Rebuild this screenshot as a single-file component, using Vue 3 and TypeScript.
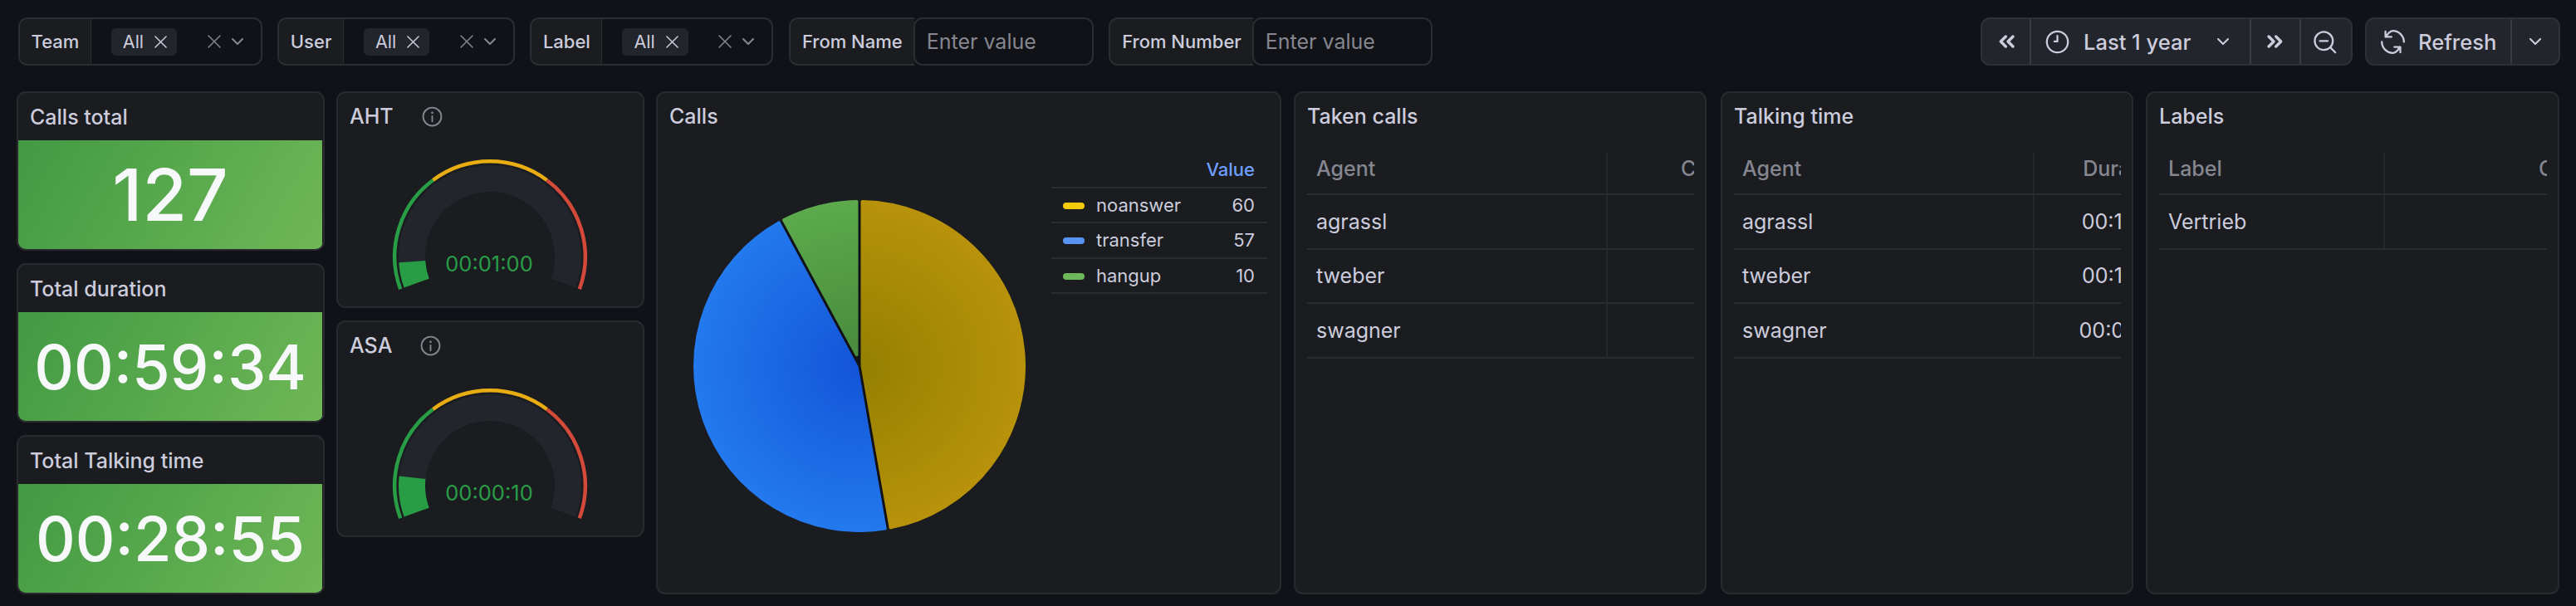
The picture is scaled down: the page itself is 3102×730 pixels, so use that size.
<script setup lang="ts">
import { computed } from "vue";

const dropdowns = ["Team", "User", "Label"];
const textFilters = ["From Name", "From Number"];
const stats = [
  { title: "Calls total", value: "127", big: true },
  { title: "Total duration", value: "00:59:34", big: false },
  { title: "Total Talking time", value: "00:28:55", big: false },
];

// gauges share one geometry, only the value differs
const CX = 125;
const CY = 125;
const START = 200;
const SWEEP = 220;

const polar = (r: number, deg: number) => {
  const a = (deg * Math.PI) / 180;
  return [CX + r * Math.cos(a), CY - r * Math.sin(a)];
};

const arc = (r: number, from: number, to: number) => {
  const [x0, y0] = polar(r, START - SWEEP * from);
  const [x1, y1] = polar(r, START - SWEEP * to);
  const large = (to - from) * SWEEP > 180 ? 1 : 0;
  return `M${x0} ${y0}A${r} ${r} 0 ${large} 1 ${x1} ${y1}`;
};

const gauges = [
  { title: "AHT", value: "00:01:00", pct: 0.074 },
  { title: "ASA", value: "00:00:10", pct: 0.118 },
];
const thresholds = [
  { from: 0, to: 1 / 3, color: "#299c46" },
  { from: 1 / 3, to: 2 / 3, color: "#e8ad12" },
  { from: 2 / 3, to: 1, color: "#d44a3a" },
];

const legend = [
  { name: "noanswer", value: 60, color: "#f2cc0c", inner: "#948000", outer: "#b8920a" },
  { name: "transfer", value: 57, color: "#5794f2", inner: "#1354d8", outer: "#2379ee" },
  { name: "hangup", value: 10, color: "#6cb85a", inner: "#47893b", outer: "#5caa4c" },
];

const PIE_R = 200;
const slices = computed(() => {
  const total = legend.reduce((s, l) => s + l.value, 0);
  const sw = 4;
  const h = 1.5 + sw / 2;
  const r = PIE_R - sw / 2;
  let at = 0;
  return legend.map((l, i) => {
    const size = (l.value / total) * 2 * Math.PI;
    const a0 = at;
    const a1 = at + size;
    at = a1;
    const d = Math.asin(h / r);
    const mid = (a0 + a1) / 2;
    const apex = h / Math.sin(size / 2);
    const px = (rad: number, a: number) => [PIE_R + rad * Math.sin(a), PIE_R - rad * Math.cos(a)];
    const [ax, ay] = px(apex, mid);
    const [x0, y0] = px(r, a0 + d);
    const [x1, y1] = px(r, a1 - d);
    return {
      id: `pie-${i}`,
      inner: l.inner,
      outer: l.outer,
      d: `M${ax} ${ay}L${x0} ${y0}A${r} ${r} 0 ${size > Math.PI ? 1 : 0} 1 ${x1} ${y1}Z`,
    };
  });
});

const tables = [
  {
    title: "Taken calls",
    head: ["Agent", "Count"],
    rows: [["agrassl", ""], ["tweber", ""], ["swagner", ""]],
    cls: "t-taken",
  },
  {
    title: "Talking time",
    head: ["Agent", "Duration"],
    rows: [["agrassl", "00:13:48"], ["tweber", "00:13:00"], ["swagner", "00:02:07"]],
    cls: "t-talk",
  },
  {
    title: "Labels",
    head: ["Label", "Count"],
    rows: [["Vertrieb", ""]],
    cls: "t-labels",
  },
];
</script>

<template>
  <div class="page">
    <header class="toolbar">
      <div v-for="name in dropdowns" :key="name" class="filter">
        <label class="filter-label">{{ name }}</label>
        <div class="filter-field">
          <span class="chip">All
            <svg class="ic-chip" viewBox="4 4 16 16"><path d="M5 5l14 14M19 5L5 19" /></svg>
          </span>
          <svg class="ic-clear" viewBox="4 4 16 16"><path d="M5 5l14 14M19 5L5 19" /></svg>
          <svg class="ic-angle" viewBox="0 0 24 24"><path d="M6 9l6 6 6-6" /></svg>
        </div>
      </div>
      <div v-for="name in textFilters" :key="name" class="filter">
        <label class="filter-label text-label">{{ name }}</label>
        <input class="filter-input" placeholder="Enter value" />
      </div>

      <div class="spacer"></div>

      <div class="btn-group">
        <button class="tb-btn square first-btn">
          <svg class="ic-double" viewBox="0 0 24 24"><path d="M11.5 7.500L7 12l4.500 4.500M18 7.500L13.500 12l4.500 4.500" /></svg>
        </button>
        <button class="tb-btn range">
          <svg class="ic-btn" viewBox="0 0 24 24">
            <circle cx="12" cy="12" r="10.500" />
            <path d="M12 6v5.500H9" />
          </svg>
          <span class="range-text">Last 1 year</span>
          <svg class="ic-small" viewBox="0 0 24 24"><path d="M6 9l6 6 6-6" /></svg>
        </button>
        <button class="tb-btn square">
          <svg class="ic-double" viewBox="0 0 24 24"><path d="M6 7.500L10.500 12 6 16.500M12.500 7.500L17 12l-4.500 4.500" /></svg>
        </button>
        <button class="tb-btn square last">
          <svg class="ic-btn ic-zoom" viewBox="0 0 24 24">
            <circle cx="11" cy="11" r="9" />
            <path d="M7 11h8M17.500 17.500L22.500 22.500" />
          </svg>
        </button>
      </div>

      <div class="btn-group refresh">
        <button class="tb-btn refresh-main">
          <svg class="ic-btn" viewBox="0 0 24 24">
            <path d="M23 12C23 6 18 1 12 1 9 1 6.500 4.500 5 7M4.600 1.500V7h6" />
            <path d="M1 12c0 6 5 11 11 11 3 0 5.500-3.500 7-6M19.400 22.500V17h-6" />
          </svg>
          <span>Refresh</span>
        </button>
        <button class="tb-btn refresh-menu">
          <svg class="ic-small" viewBox="0 0 24 24"><path d="M6 9l6 6 6-6" /></svg>
        </button>
      </div>
    </header>

    <main class="dash">
      <div class="col col-stats">
        <section v-for="s in stats" :key="s.title" class="panel stat">
          <h2 class="panel-title stat-title">{{ s.title }}</h2>
          <div class="stat-body" :class="{ big: s.big }">{{ s.value }}</div>
        </section>
      </div>

      <div class="col col-gauges">
        <section v-for="g in gauges" :key="g.title" class="panel gauge">
          <h2 class="panel-title gauge-title">
            {{ g.title }}
            <svg class="ic-info" viewBox="0 0 24 24">
              <circle cx="12" cy="12" r="10.500" />
              <path d="M12 11.500v6" />
              <circle class="dot" cx="12" cy="7.500" r="1.300" />
            </svg>
          </h2>
          <svg class="gauge-svg" viewBox="0 0 250 170">
            <path :d="arc(94, 0, 1)" class="g-track" />
            <path :d="arc(94, 0, g.pct)" class="g-fill" />
            <path v-for="t in thresholds" :key="t.color" :d="arc(114.75, t.from, t.to)" class="g-thresh" :stroke="t.color" />
            <text x="124" y="143" text-anchor="middle" class="g-value">{{ g.value }}</text>
          </svg>
        </section>
      </div>

      <section class="panel pie-panel">
        <h2 class="panel-title">Calls</h2>
        <div class="pie-body">
          <svg class="pie" viewBox="0 0 400 400">
            <defs>
              <radialGradient v-for="s in slices" :id="s.id" :key="s.id" gradientUnits="userSpaceOnUse" cx="200" cy="200" r="200">
                <stop offset="0" :stop-color="s.inner" />
                <stop offset="1" :stop-color="s.outer" />
              </radialGradient>
            </defs>
            <circle cx="200" cy="200" r="197" fill="#111217" />
            <path v-for="s in slices" :key="s.id" :d="s.d" :fill="`url(#${s.id})`" :stroke="`url(#${s.id})`" stroke-width="4" stroke-linejoin="round" />
          </svg>
          <table class="legend">
            <thead>
              <tr><th></th><th class="legend-value">Value</th></tr>
            </thead>
            <tbody>
              <tr v-for="l in legend" :key="l.name">
                <td class="legend-name">
                  <i class="swatch" :style="{ background: l.color }"></i>{{ l.name }}
                </td>
                <td class="legend-num">{{ l.value }}</td>
              </tr>
            </tbody>
          </table>
        </div>
      </section>

      <section v-for="t in tables" :key="t.title" class="panel table-panel" :class="t.cls">
        <h2 class="panel-title">{{ t.title }}</h2>
        <div class="table-wrap">
          <div class="tr th">
            <div class="td first">{{ t.head[0] }}</div>
            <div class="td second">{{ t.head[1] }}</div>
          </div>
          <div v-for="r in t.rows" :key="r[0]" class="tr">
            <div class="td first">{{ r[0] }}</div>
            <div class="td second">{{ r[1] }}</div>
          </div>
        </div>
      </section>
    </main>
  </div>
</template>

<style>
html,
body {
  margin: 0;
  background: #111217;
  overflow: hidden;
}
</style>

<style scoped>
.page {
  width: 3102px;
  height: 730px;
  box-sizing: border-box;
  padding: 21px 19px 0 20px;
  background: #111217;
  color: #ccccdc;
  font-family: Inter, "Noto Sans", sans-serif;
  font-size: 25px;
}

svg {
  fill: none;
  stroke: currentColor;
  stroke-linecap: round;
  stroke-linejoin: round;
  flex: none;
}

/* toolbar */
.toolbar {
  display: flex;
  height: 58px;
  gap: 18.5px;
  padding-left: 2px;
}

.spacer {
  flex: 1;
}

.filter {
  display: flex;
  height: 58px;
}

.filter-label {
  display: flex;
  align-items: center;
  padding: 0 13.5px;
  font-size: 22px;
  font-weight: 500;
  background: #1a1c20;
  border: 2px solid #2b2d33;
  border-right-width: 1px;
  border-radius: 11px 0 0 11px;
  box-sizing: content-box;
  height: 54px;
}

.text-label {
  padding: 0 14px;
  border-right-width: 0;
}

.filter-field {
  width: 206px;
  box-sizing: border-box;
  display: flex;
  align-items: center;
  padding-left: 24px;
  border: 2px solid #2b2d33;
  border-left: 0;
  border-radius: 0 11px 11px 0;
}

.chip {
  display: flex;
  align-items: center;
  gap: 13px;
  height: 33px;
  padding: 0 12px 0 14px;
  font-size: 21.5px;
  background: #22252b;
  border-radius: 6px;
}

.ic-chip {
  width: 15px;
  height: 15px;
  stroke-width: 1.6;
}

.ic-clear {
  width: 16px;
  height: 16px;
  margin-left: auto;
  stroke-width: 1.5;
  color: #85868f;
}

.ic-angle {
  width: 24px;
  height: 24px;
  margin: 0 16px 0 8px;
  stroke-width: 2.1;
  color: #85868f;
}

.filter-input {
  width: 217px;
  height: 58px;
  box-sizing: border-box;
  padding: 0 14px;
  margin-left: -1px;
  font: 400 25px Inter, "Noto Sans", sans-serif;
  color: #ccccdc;
  background: #111217;
  border: 2px solid #2b2d33;
  border-radius: 11px;
  outline: none;
}

.filter-input::placeholder {
  color: #85868f;
  opacity: 1;
}

.btn-group {
  display: flex;
  height: 58px;
  box-sizing: border-box;
  background: #22252b;
  border: 2px solid #2e3036;
  border-radius: 11px;
}

.refresh {
  width: 235px;
  margin-left: -3.5px;
}

.tb-btn {
  display: flex;
  align-items: center;
  padding: 0;
  font: 500 25.5px Inter, "Noto Sans", sans-serif;
  color: #ccccdc;
  background: none;
  border: 0;
  border-right: 2px solid #3a3c42;
}

.square {
  width: 60px;
  justify-content: center;
}

.first-btn {
  width: 59px;
}

.last,
.refresh-menu {
  border-right: 0;
}

.range {
  width: 265px;
  padding-left: 17px;
  box-sizing: border-box;
}

.range-text {
  margin-left: 17px;
}

.ic-btn {
  width: 29px;
  height: 29px;
  stroke-width: 1.9;
}

.ic-double {
  width: 32px;
  height: 32px;
  stroke-width: 2.6;
}

.ic-zoom {
  margin-right: 3px;
}

.ic-small {
  width: 24px;
  height: 24px;
  stroke-width: 2.1;
  margin-left: auto;
  margin-right: 20px;
}

.refresh-main {
  width: 175px;
  padding-left: 17px;
  box-sizing: border-box;
  gap: 16px;
}

.refresh-menu {
  flex: 1;
  justify-content: center;
}

.refresh-menu .ic-small {
  margin: 0;
}

/* panels */
.dash {
  display: flex;
  align-items: flex-start;
  gap: 15px;
  margin-top: 31px;
}

.col {
  display: flex;
  flex-direction: column;
  gap: 15px;
  width: 371px;
}

.col-gauges {
  margin-left: -1px;
}

.panel {
  box-sizing: border-box;
  background: #1a1c20;
  border: 2px solid #282a2f;
  border-radius: 11px;
  overflow: hidden;
}

.panel-title {
  margin: 0;
  padding: 0 14px;
  height: 56px;
  display: flex;
  align-items: center;
  font-size: 25px;
  font-weight: 500;
  color: #ccccdc;
}

.stat {
  height: 192px;
}

.stat-title {
  height: 57px;
}

.stat-body {
  height: 131px;
  margin-right: 1px;
  display: flex;
  align-items: center;
  justify-content: center;
  font-size: 74px;
  font-weight: 500;
  color: #f7f8fa;
  background: linear-gradient(120deg, #429a43, #6fb757);
}

.big {
  font-size: 87px;
}

.gauge {
  height: 261px;
}

.gauge-title {
  gap: 34px;
}

.ic-info {
  width: 25px;
  height: 25px;
  stroke-width: 1.8;
  color: #85868f;
}

.dot {
  fill: currentColor;
  stroke: none;
}

.gauge-svg {
  display: block;
  width: 250px;
  height: 170px;
  margin: 16px 0 0 58px;
  stroke-linecap: butt;
}

.g-track {
  stroke: #22252b;
  stroke-width: 32;
}

.g-fill {
  stroke: #299c46;
  stroke-width: 32;
}

.g-thresh {
  stroke-width: 4.5;
}

.g-value {
  font-size: 25.5px;
  fill: #299c46;
  stroke: none;
}

.pie-panel {
  width: 753px;
  height: 606px;
  margin-left: -1px;
}

.pie-body {
  display: flex;
  align-items: flex-start;
}

.pie {
  width: 400px;
  height: 400px;
  margin: 73px 0 0 43px;
  stroke: none;
}

.legend {
  width: 260px;
  margin: 15px 0 0 31px;
  border-collapse: collapse;
  font-size: 22px;
}

.legend th,
.legend td {
  height: 42.6px;
  padding: 0;
  border-bottom: 2px solid #2a2c31;
  box-sizing: border-box;
}

.legend .legend-value {
  padding-right: 15px;
  text-align: right;
  font-weight: 500;
  color: #6e9fff;
}

.legend .legend-name {
  padding-left: 14px;
}

.swatch {
  display: inline-block;
  width: 26px;
  height: 8px;
  margin-right: 14px;
  border-radius: 4px;
  vertical-align: 3px;
}

.legend .legend-num {
  padding-right: 15px;
  text-align: right;
}

/* tables */
.table-panel {
  width: 497px;
  height: 606px;
}

.t-talk {
  margin-left: 2px;
}

.t-labels {
  width: 498px;
}

.table-wrap {
  margin: 16px 13px 0 14px;
  overflow: hidden;
}

.tr {
  display: flex;
  height: 65.5px;
  box-sizing: border-box;
  border-bottom: 2px solid #2a2c31;
}

.th {
  height: 51px;
  color: #85868f;
  font-weight: 500;
}

.th .td {
  padding-bottom: 12px;
}

.td {
  display: flex;
  align-items: center;
  box-sizing: border-box;
  flex: none;
}

.first {
  width: 362px;
  padding-left: 11px;
  border-right: 2px solid #26282d;
}

.t-talk .first {
  padding-left: 10px;
}

.second {
  width: 200px;
  justify-content: flex-end;
  padding-right: 40px;
}

.t-labels .first {
  width: 272px;
}

.t-labels .second {
  width: 300px;
  padding-right: 43px;
}
</style>
